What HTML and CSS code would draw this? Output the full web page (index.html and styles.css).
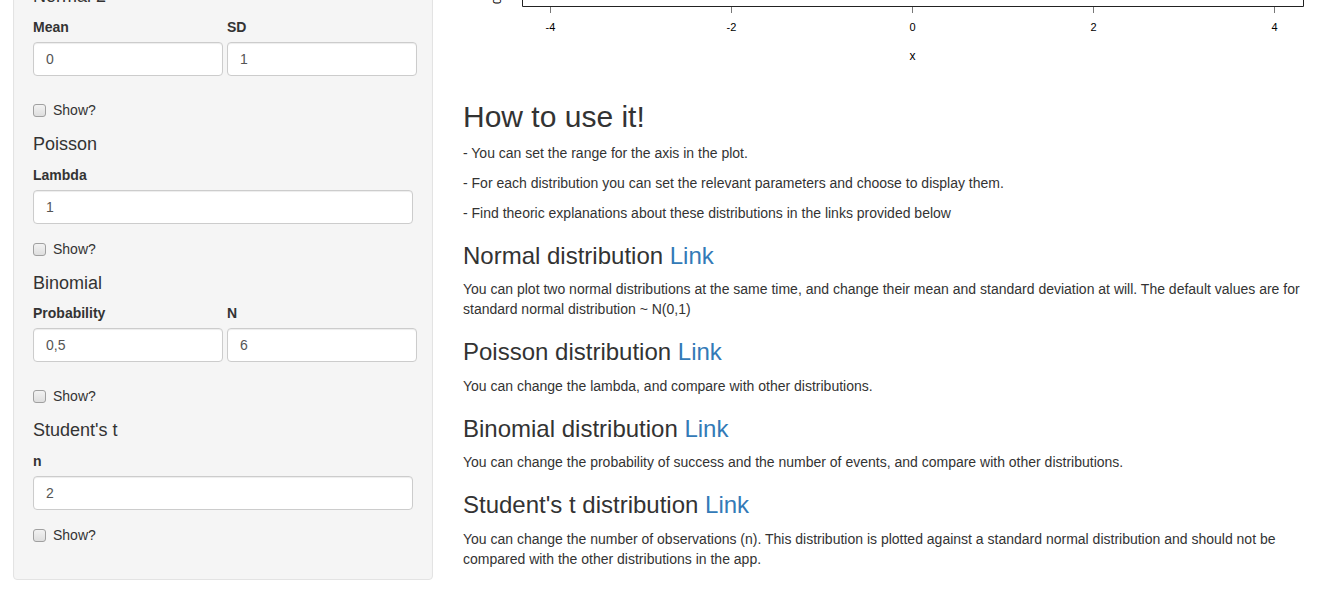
FILE: index.html
```html
<!DOCTYPE html>
<html lang="en">
<head>
<meta charset="utf-8">
<title>Distributions</title>
<link rel="stylesheet" href="styles.css">
</head>
<body>
<div class="page">
  <aside class="well">
    <h4 class="group-title">Normal 2</h4>
    <div class="split">
      <div class="form-group">
        <label class="control-label">Mean</label>
        <input class="form-control" type="text" value="0">
      </div>
      <div class="form-group">
        <label class="control-label">SD</label>
        <input class="form-control" type="text" value="1">
      </div>
    </div>
    <div class="checkbox"><label><input type="checkbox"><span>Show?</span></label></div>

    <h4 class="group-title">Poisson</h4>
    <div class="form-group">
      <label class="control-label">Lambda</label>
      <input class="form-control" type="text" value="1">
    </div>
    <div class="checkbox"><label><input type="checkbox"><span>Show?</span></label></div>

    <h4 class="group-title">Binomial</h4>
    <div class="split">
      <div class="form-group">
        <label class="control-label">Probability</label>
        <input class="form-control" type="text" value="0,5">
      </div>
      <div class="form-group">
        <label class="control-label">N</label>
        <input class="form-control" type="text" value="6">
      </div>
    </div>
    <div class="checkbox"><label><input type="checkbox"><span>Show?</span></label></div>

    <h4 class="group-title">Student's t</h4>
    <div class="form-group">
      <label class="control-label">n</label>
      <input class="form-control" type="text" value="2">
    </div>
    <div class="checkbox"><label><input type="checkbox"><span>Show?</span></label></div>
  </aside>

  <main class="main">
    <svg class="plot" width="866" height="80" viewBox="0 0 866 80" xmlns="http://www.w3.org/2000/svg">
      <text class="ylab" transform="translate(38,4) rotate(-90)">0.0</text>
      <path d="M59.5 0 V6.5 H840.5 V0" fill="none" stroke="#222" stroke-width="1"/>
      <g stroke="#777" stroke-width="1">
        <line x1="87.5" y1="7" x2="87.5" y2="13"/>
        <line x1="268.5" y1="7" x2="268.5" y2="13"/>
        <line x1="449.5" y1="7" x2="449.5" y2="13"/>
        <line x1="630.5" y1="7" x2="630.5" y2="13"/>
        <line x1="811.5" y1="7" x2="811.5" y2="13"/>
      </g>
      <g class="ticklab" text-anchor="middle">
        <text x="87.5" y="31">-4</text>
        <text x="268.5" y="31">-2</text>
        <text x="449.5" y="31">0</text>
        <text x="630.5" y="31">2</text>
        <text x="811.5" y="31">4</text>
      </g>
      <text class="xlab" x="449.5" y="60" text-anchor="middle">x</text>
    </svg>

    <h2>How to use it!</h2>
    <p>- You can set the range for the axis in the plot.</p>
    <p>- For each distribution you can set the relevant parameters and choose to display them.</p>
    <p>- Find theoric explanations about these distributions in the links provided below</p>

    <h3>Normal distribution <a href="#">Link</a></h3>
    <p>You can plot two normal distributions at the same time, and change their mean and standard deviation at will. The default values are for standard normal distribution ~ N(0,1)</p>

    <h3>Poisson distribution <a href="#">Link</a></h3>
    <p>You can change the lambda, and compare with other distributions.</p>

    <h3>Binomial distribution <a href="#">Link</a></h3>
    <p>You can change the probability of success and the number of events, and compare with other distributions.</p>

    <h3>Student's t distribution <a href="#">Link</a></h3>
    <p>You can change the number of observations (n). This distribution is plotted against a standard normal distribution and should not be compared with the other distributions in the app.</p>
  </main>
</div>
</body>
</html>
```

FILE: styles.css
```css
* {
  box-sizing: border-box;
}

html,
body {
  margin: 0;
  background: #fff;
}

body {
  font-family: "Liberation Sans", Arial, Helvetica, sans-serif;
  font-size: 14px;
  line-height: 20px;
  color: #333;
  overflow: hidden;
}

.page {
  display: grid;
  grid-template-columns: 420px 1fr;
  column-gap: 30px;
  align-items: start;
  padding: 0 15px 0 13px;
}

/* Sidebar */
.well {
  margin-top: -33px;
  padding: 19px;
  background: #f5f5f5;
  border: 1px solid #e3e3e3;
  border-radius: 4px;
  box-shadow: inset 0 1px 1px rgba(0, 0, 0, 0.05);
}

.group-title {
  margin: 0 0 10px;
  font-size: 18px;
  line-height: 1.1;
  font-weight: 500;
  color: #333;
}

.form-group {
  margin-bottom: 15px;
}

.control-label {
  display: block;
  margin-bottom: 5px;
  font-weight: bold;
}

.form-control {
  display: block;
  width: 100%;
  height: 34px;
  padding: 6px 12px;
  font-family: inherit;
  font-size: 14px;
  line-height: 20px;
  color: #555;
  background: #fff;
  border: 1px solid #ccc;
  border-radius: 4px;
  box-shadow: inset 0 1px 1px rgba(0, 0, 0, 0.075);
  outline: none;
}

.split {
  display: grid;
  grid-template-columns: 190px 190px;
  column-gap: 4px;
  margin-bottom: 24px;
}

.split .form-group {
  margin-bottom: 0;
}

.checkbox {
  margin-bottom: 15px;
}

.checkbox label {
  display: flex;
  align-items: flex-start;
  font-weight: normal;
  line-height: 20px;
}

.checkbox input {
  -webkit-appearance: none;
  appearance: none;
  width: 13px;
  height: 13px;
  margin: 4px 7px 0 0;
  flex: none;
  background: linear-gradient(#f2f2f2, #dedede);
  border: 1px solid #a0a0a0;
  border-radius: 3px;
}

/* Main */
.main {
  min-width: 0;
}

.plot {
  display: block;
}

.ticklab,
.xlab,
.ylab {
  font-family: "Liberation Sans", Arial, sans-serif;
  font-size: 11px;
  fill: #000;
}

.xlab {
  font-size: 12px;
}

.main h2 {
  margin: 20px 0 10px;
  font-size: 30px;
  line-height: 1.1;
  font-weight: 500;
}

.main h3 {
  margin: 20px 0 10px;
  font-size: 24px;
  line-height: 1.1;
  font-weight: 500;
}

.main p {
  margin: 0 0 10px;
}

.main a {
  color: #337ab7;
  text-decoration: none;
}
```
